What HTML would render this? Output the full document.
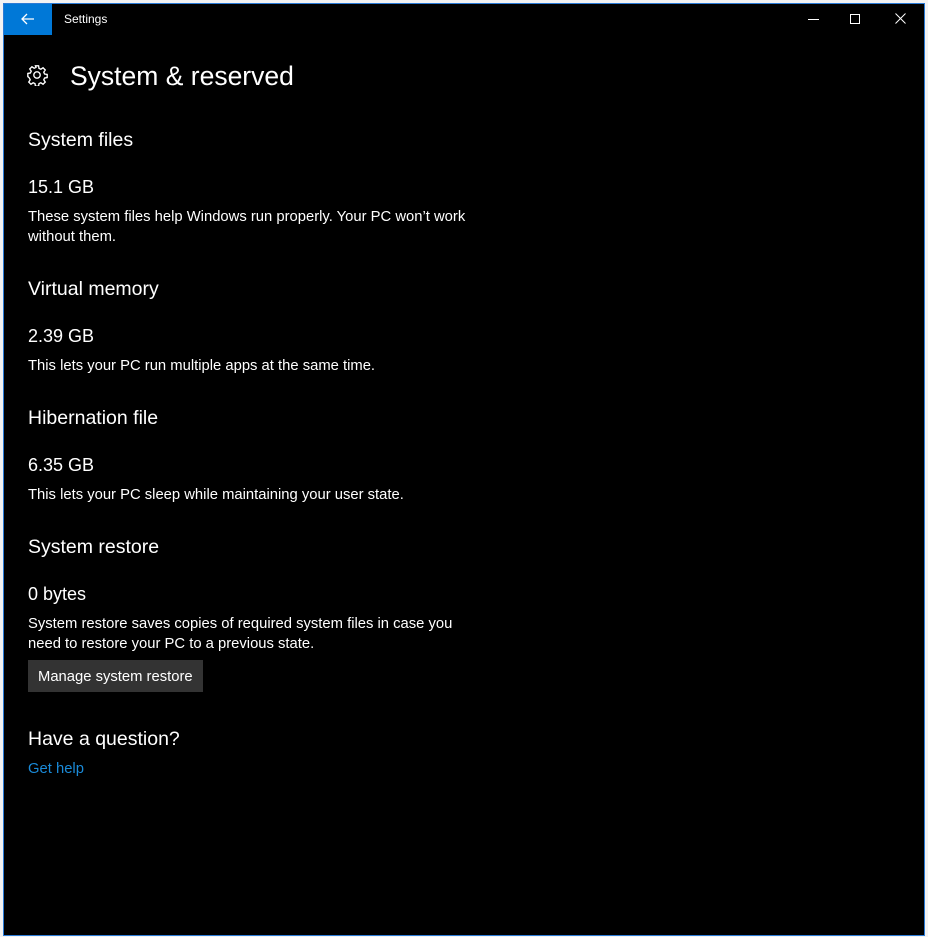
<!DOCTYPE html>
<html><head><style>
html,body{margin:0;padding:0;}
body{width:928px;height:937px;background:#f3f3f3;position:relative;overflow:hidden;font-family:"Liberation Sans",sans-serif;color:#fff;}
#win{position:absolute;left:3px;top:3px;width:920px;height:931px;background:#000;border:1px solid #2b7bd6;}
.t{position:absolute;white-space:nowrap;left:24px;}
.h{font-size:19.5px;}
.v{font-size:18px;}
.b{font-size:14.8px;line-height:20px;}
</style></head><body>
<div id="win">
 <div style="position:absolute;left:0;top:0;width:48px;height:31px;background:#0078d7;"></div>
 <svg style="position:absolute;left:16px;top:8px" width="16" height="14" viewBox="0 0 16 14"><path d="M14 7H2M7 2L2 7l5 5" stroke="#fff" stroke-width="1.3" fill="none"/></svg>
 <div class="t" style="left:60px;top:8px;font-size:12px;">Settings</div>
 <div style="position:absolute;left:804px;top:15px;width:11px;height:1px;background:#fff"></div>
 <div style="position:absolute;left:846px;top:10px;width:8px;height:8px;border:1px solid #fff"></div>
 <svg style="position:absolute;left:891px;top:9px" width="11" height="11"><path d="M0.5 0.5L10.5 10.5M10.5 0.5L0.5 10.5" stroke="#fff" stroke-width="1"/></svg>
 <svg style="position:absolute;left:22px;top:60px" width="22" height="22" viewBox="0 0 24 24"><path fill="none" stroke="#fff" stroke-width="1.5" d="M10.3 2h3.4l.5 2.8 2 .9 2.4-1.6 2.4 2.4-1.6 2.4.9 2 2.8.5v3.4l-2.8.5-.9 2 1.6 2.4-2.4 2.4-2.4-1.6-2 .9-.5 2.8h-3.4l-.5-2.8-2-.9-2.4 1.6-2.4-2.4 1.6-2.4-.9-2L2 13.7v-3.4l2.8-.5.9-2-1.6-2.4 2.4-2.4 2.4 1.6 2-.9z"/><circle cx="12" cy="12" r="3.5" fill="none" stroke="#fff" stroke-width="1.5"/></svg>
 <div class="t" style="left:66px;top:57px;font-size:26.5px;">System &amp; reserved</div>

 <div class="t h" style="top:125px;">System files</div>
 <div class="t v" style="top:173px;">15.1 GB</div>
 <div class="t b" style="top:203px;">These system files help Windows run properly. Your PC won’t work<br>without them.</div>

 <div class="t h" style="top:274px;">Virtual memory</div>
 <div class="t v" style="top:322px;">2.39 GB</div>
 <div class="t b" style="top:352px;">This lets your PC run multiple apps at the same time.</div>

 <div class="t h" style="top:403px;">Hibernation file</div>
 <div class="t v" style="top:451px;">6.35 GB</div>
 <div class="t b" style="top:481px;">This lets your PC sleep while maintaining your user state.</div>

 <div class="t h" style="top:532px;">System restore</div>
 <div class="t v" style="top:580px;">0 bytes</div>
 <div class="t b" style="top:610px;">System restore saves copies of required system files in case you<br>need to restore your PC to a previous state.</div>
 <div style="position:absolute;left:24px;top:656px;width:175px;height:32px;background:#333;"></div>
 <div class="t b" style="left:34px;top:663px;">Manage system restore</div>

 <div class="t h" style="top:724px;">Have a question?</div>
 <div class="t b" style="top:755px;color:#1a8ad8;">Get help</div>
</div>
</body></html>
